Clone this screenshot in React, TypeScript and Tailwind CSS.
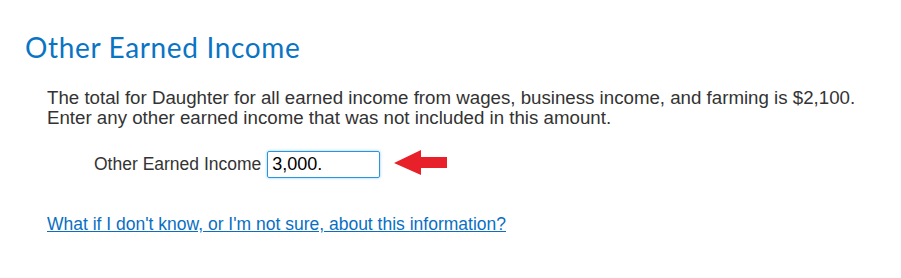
import React from "react";

export default function App() {
  return (
    <div className="w-[901px] h-[278px] bg-white overflow-hidden">
      <div className="pl-[25px] pt-[30px]">
        <h1 className="font-['Lato',sans-serif] text-[28px] leading-[34px] text-[#0a74c4] tracking-[0.65px]">
          Other Earned Income
        </h1>
      </div>
      <div className="pl-[47px] pt-[24px] font-['Liberation_Sans',Arial,sans-serif] text-[#333333]">
        <p className="text-[18.7px] leading-[20px]">
          The total for Daughter for all earned income from wages, business income, and farming is $2,100.
        </p>
        <p className="text-[18.7px] leading-[20px]">
          Enter any other earned income that was not included in this amount.
        </p>
        <div className="flex items-center pl-[47px] pt-[22px]">
          <span className="mr-[6px] text-[17.5px] leading-[20px]">Other Earned Income</span>
          <div className="w-[113px] h-[27px] border border-[#2a95dd] rounded-[2px] shadow-[0_0_3px_#8cc8f0] flex items-center pl-[4px] text-[18px] text-black">
            3,000.
          </div>
          <svg className="ml-[14px] mb-[2px]" width="54" height="26" viewBox="0 0 54 26">
            <path d="M0 13 L27 0 L27 7 L53 7 L53 18 L27 18 L27 25 Z" fill="#e8202a" />
          </svg>
        </div>
        <div className="pt-[36px] text-[17.5px] leading-[20px]">
          <a href="#" className="text-[#0a6fc2] underline">
            What if I don't know, or I'm not sure, about this information?
          </a>
        </div>
      </div>
    </div>
  );
}
